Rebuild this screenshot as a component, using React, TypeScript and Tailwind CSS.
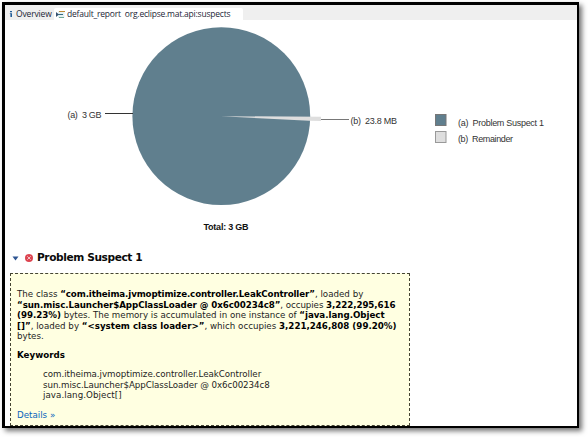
import React from "react";

function TabBar() {
  return (
    <div className="flex h-[15px] shrink-0 bg-[#efefef] font-['Open_Sans','Noto_Sans',sans-serif] text-[8.5px] leading-[14px] text-[#1c2536]">
      <div className="flex w-[49px] pl-[4px] pt-[2px]">
        <svg className="mt-[3px] h-[8px] w-[4px] shrink-0" viewBox="0 0 4 8">
          <path d="M1 1h2v1.3H1zM0.8 3.2H3V7H1.4V4H.8z" fill="#245d98" />
        </svg>
        <span className="ml-[3px] whitespace-nowrap tracking-[-0.16px]">Overview</span>
      </div>
      <div className="mt-[3px] flex w-[189px] rounded-t-[2px] bg-white pl-[2px]">
        <svg className="mt-[2px] h-[9px] w-[9px] shrink-0" viewBox="0 0 9 9">
          <path d="M2 1h6.5v7H2z" fill="#e4f1f4" />
          <path d="M3 1.5h6" stroke="#c08a35" />
          <path d="M0 2l3 2.5L0 7z" fill="#35516f" />
          <path d="M2 4.5h5" stroke="#376a80" />
          <path d="M3 7.5h5" stroke="#72a997" />
        </svg>
        <span className="-mt-px ml-[2px] whitespace-nowrap tracking-[-0.21px]">default_report&nbsp; org.eclipse.mat.api:suspects</span>
      </div>
    </div>
  );
}

function Chart() {
  return (
    <svg className="block h-[225px] w-full shrink-0" viewBox="5 20 572 225" fontFamily="'Liberation Sans', Arial, sans-serif" fontSize="9" fill="#333">
      <circle cx="221.3" cy="116.2" r="88.9" fill="#607f8e" />
      <path d="M221 116.2L321 116.7V121L309 120.8z" fill="#dedede" />
      <path d="M105 113.5h28" stroke="#333" />
      <path d="M321 119.5h28" stroke="#777" />
      <text x="67.5" y="118" textLength="34" xmlSpace="preserve">(a)  3 GB</text>
      <text x="350.5" y="123.5" textLength="46.5" xmlSpace="preserve">(b)  23.8 MB</text>
      <text x="203.5" y="229.5" textLength="45" fontWeight="bold" fill="#111">Total: 3 GB</text>
      <rect x="435.5" y="114.5" width="10.5" height="11" fill="#607f8e" stroke="#777" />
      <rect x="435.5" y="131.5" width="10.5" height="11" fill="#dedede" stroke="#999" />
      <text x="458" y="125.5" textLength="86" xmlSpace="preserve">(a)  Problem Suspect 1</text>
      <text x="458" y="141.5" textLength="55" xmlSpace="preserve">(b)  Remainder</text>
    </svg>
  );
}

function Details() {
  return (
    <div className="ml-[5px] h-[153px] w-[400px] shrink-0 whitespace-nowrap border border-dashed border-[#444433] bg-[#ffffe1] pl-[6px] pt-[15px] text-[8.7px] leading-[10.5px] text-[#1d1d1d]">
      <p>The class <b className="tracking-[-0.12px] text-black">“com.itheima.jvmoptimize.controller.LeakController”</b>, loaded by</p>
      <p className="tracking-[-0.07px]"><b className="text-black">“sun.misc.Launcher$AppClassLoader @ 0x6c00234c8”</b>, occupies <b className="text-black">3,222,295,616</b></p>
      <p className="tracking-[-0.02px]"><b className="text-black">(99.23%)</b> bytes. The memory is accumulated in one instance of <b className="text-black">“java.lang.Object</b></p>
      <p><b className="text-black">[]”</b>, loaded by <b className="text-black">“&lt;system class loader&gt;”</b>, which occupies <b className="text-black">3,221,246,808 (99.20%)</b></p>
      <p>bytes.</p>
      <p className="mt-[8px] font-bold text-black">Keywords</p>
      <div className="ml-[26px] mt-[9px]">
        <p className="tracking-[-0.03px]">com.itheima.jvmoptimize.controller.LeakController</p>
        <p className="tracking-[-0.07px]">sun.misc.Launcher$AppClassLoader @ 0x6c00234c8</p>
        <p className="tracking-[0.06px]">java.lang.Object[]</p>
      </div>
      <p className="mt-[9px] text-[#0864bd]">Details »</p>
    </div>
  );
}

export default function App() {
  return (
    <div className="h-[437px] w-[588px] overflow-hidden bg-white pl-[2px] pt-[2px] font-['DejaVu_Sans',Verdana,sans-serif]">
      <div className="flex h-[426px] w-[577px] flex-col border-b-2 border-l-3 border-r-2 border-t-3 border-black bg-white shadow-[3px_3px_5px_rgba(0,0,0,0.55)]">
        <TabBar />
        <Chart />
        <div className="flex h-[28px] shrink-0 items-start pl-[7px] pt-[5px]">
          <svg className="mt-[6px] h-[5px] w-[7px]" viewBox="0 0 7 5">
            <path d="M.5.5h6L3.5 4.5z" fill="#2d5592" />
          </svg>
          <svg className="ml-[6px] mt-[4px] h-[8px] w-[8px]" viewBox="0 0 8 8">
            <circle cx="4" cy="4" r="4" fill="#dd4450" />
            <path d="M2.3 2.3l3.4 3.4M5.7 2.3L2.3 5.7" stroke="#fff" strokeOpacity="0.75" strokeWidth="0.9" />
          </svg>
          <h1 className="ml-[4px] whitespace-nowrap text-[10.6px] font-bold leading-[14px] tracking-[-0.4px] text-[#0a0a0a]">Problem Suspect 1</h1>
        </div>
        <Details />
      </div>
    </div>
  );
}
